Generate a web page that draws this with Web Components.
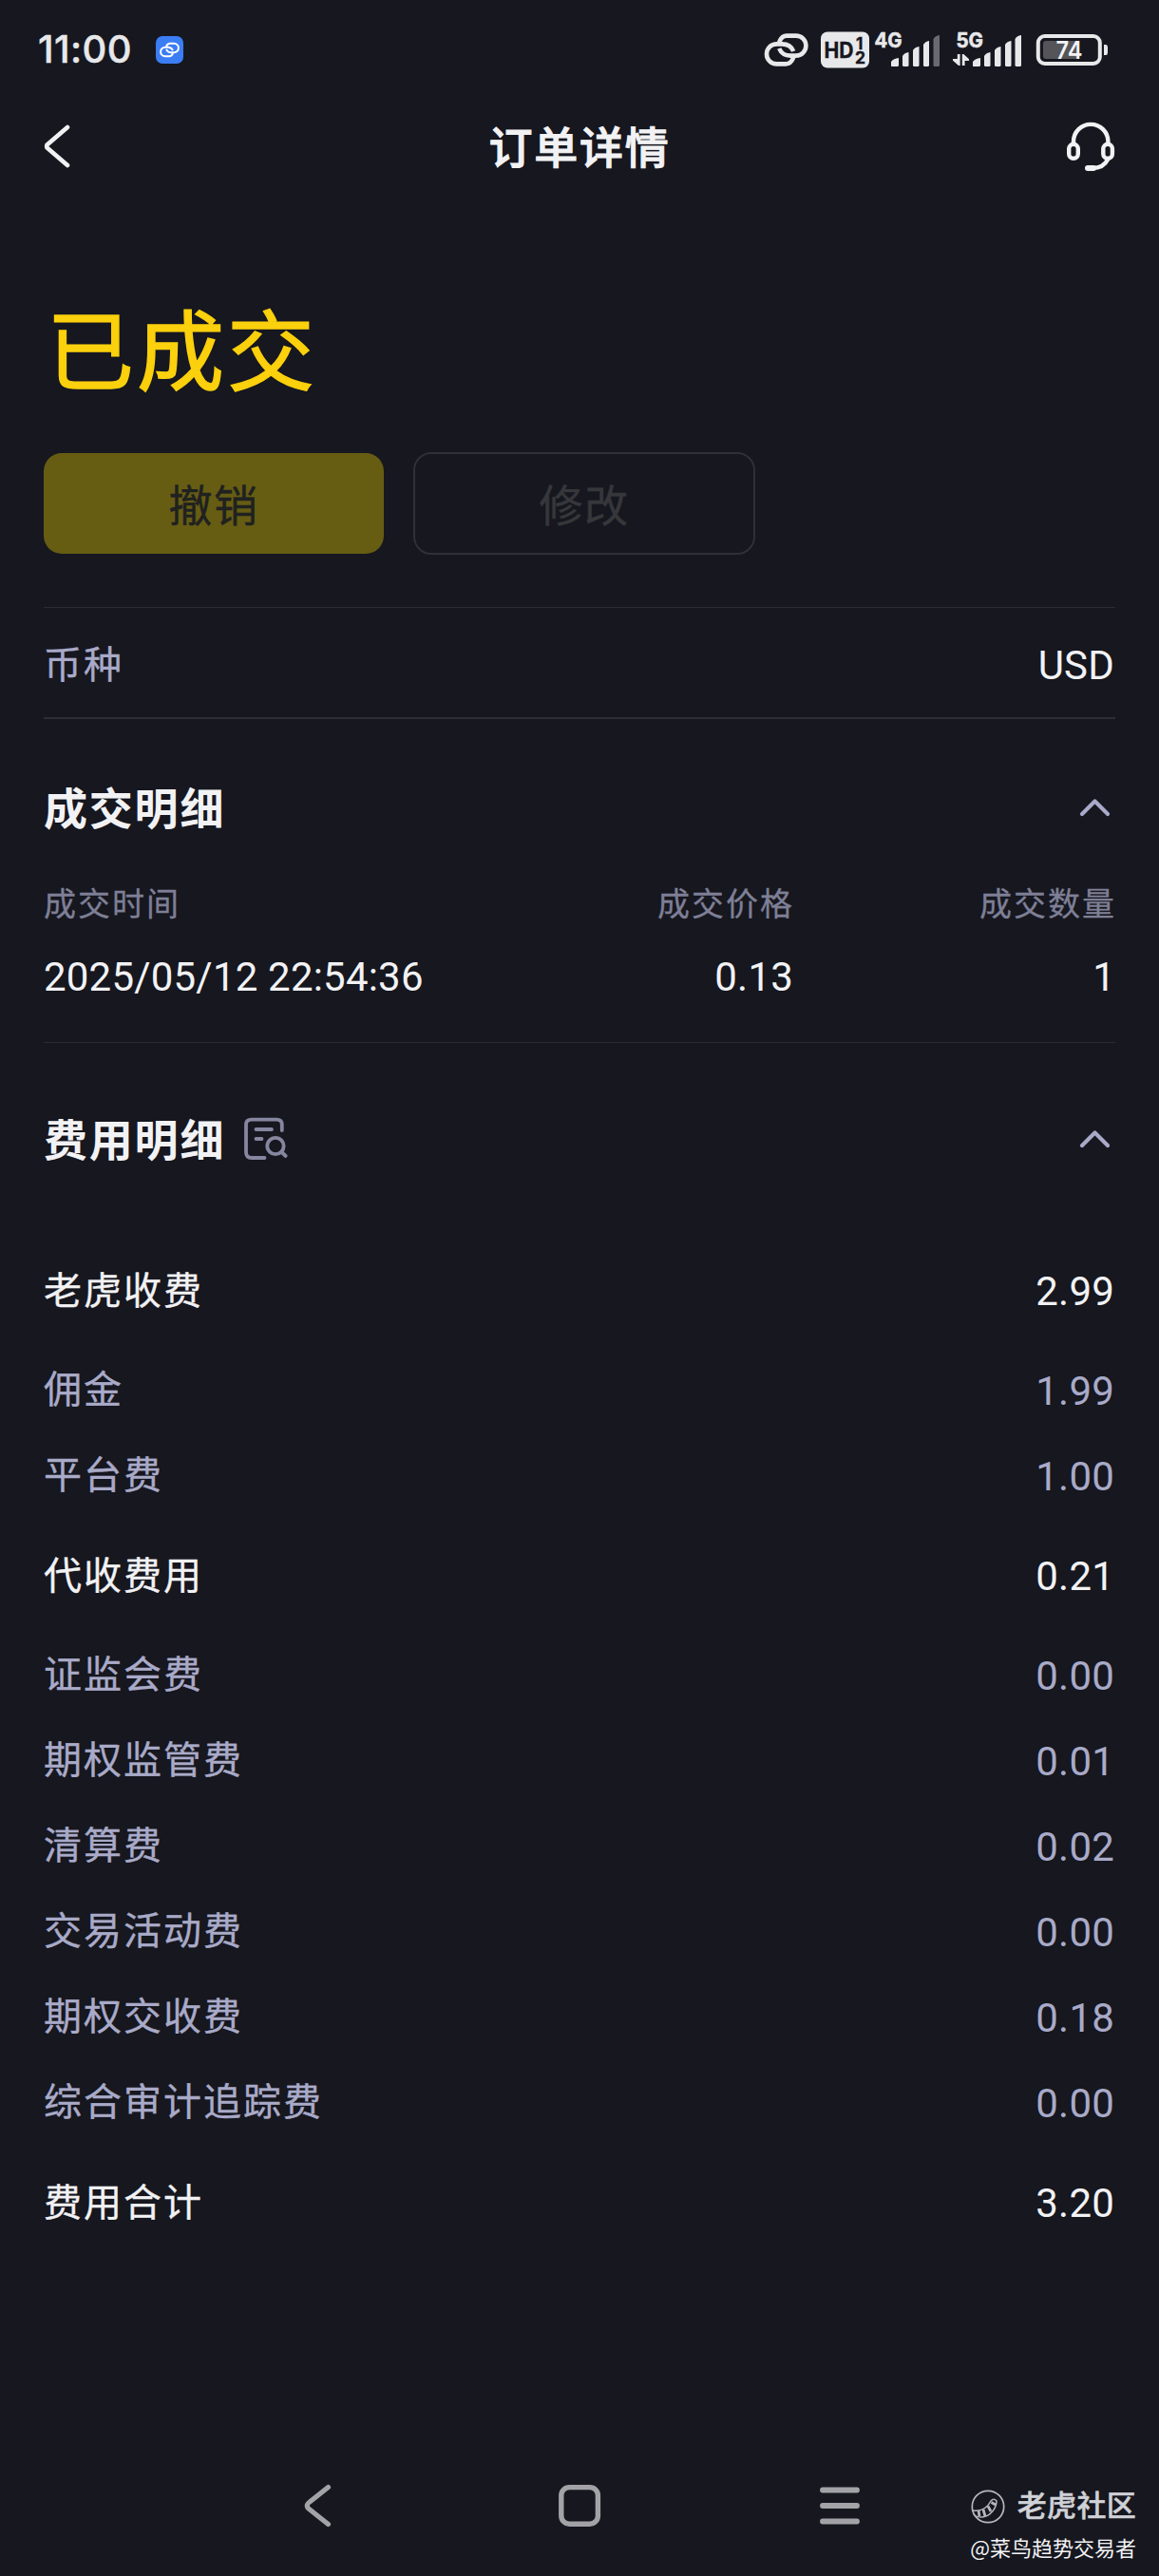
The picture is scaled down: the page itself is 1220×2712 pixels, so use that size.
<!DOCTYPE html>
<html lang="zh-CN">
<head>
<meta charset="utf-8">
<title>订单详情</title>
<style>
html,body{margin:0;background:#16171f}
body{width:1220px;height:2712px;overflow:hidden;font-family:Roboto,"Noto Sans CJK SC",sans-serif;color:#f2f2f4}
</style>
</head>
<body>
<order-page></order-page>
<script>
const define = (name, html) => customElements.define(name, class extends HTMLElement {
  constructor() {
    super();
    this.attachShadow({mode: 'open'}).innerHTML = typeof html === 'function' ? html(this) : html;
  }
});

const chain = '<path d="M-7.600-8C-5.800-12.500-2.900-14.900.5-14.900H10.200A10.500 10.500 0 0 1 10.200 6.100H4.500C-1 6.100-5.500 3.400-7.500-1.500"/><path d="M7.600 8C5.800 12.500 2.900 14.900-.5 14.900H-10.200A10.500 10.500 0 0 1-10.200-6.100H-4.500C1-6.100 5.500-3.400 7.500 1.500"/>';
const icons = {
  app: [164, 37, 29, 29, `<rect x="164" y="37" width="29" height="29" rx="7" fill="#3b7df3"/><g transform="translate(178.500 51.500) scale(.455)" fill="none" stroke="#fff" stroke-width="4.400">${chain}</g>`],
  link: [805, 33, 48, 37, `<g transform="translate(828.700 51.500)" fill="none" stroke="#e8e8ea" stroke-width="4.600">${chain}</g>`],
  hd: [865, 32, 51, 39, '<rect x="865" y="32.500" width="51" height="38" rx="7" fill="#e8e8ea"/><g fill="#16171f" stroke="#16171f" stroke-width=".4" font-family="Inter,sans-serif" font-weight="700"><text x="868.500" y="59.500" font-size="22.500" textLength="31" lengthAdjust="spacingAndGlyphs">HD</text><text x="902" y="50.500" font-size="17">1</text><text x="901" y="65.500" font-size="17" textLength="11" lengthAdjust="spacingAndGlyphs">2</text></g>'],
  four: [921, 22, 70, 58, '<text x="921.500" y="49.300" font-size="21.500" font-weight="700" stroke="#e8e8ea" stroke-width=".6" font-family="Inter,sans-serif" fill="#e8e8ea" textLength="29" lengthAdjust="spacingAndGlyphs">4G</text><g fill="#e8e8ea"><path d="M939 68.500V64Q941.500 60.500 947 60V67.500Q947 69 945.500 69H939.500Z"/><path d="M951 58Q953 54.500 957.500 54V67.500Q957.500 69 956 69H952.500Q951 69 951 67.500Z"/><path d="M962 52Q964 48.500 968.500 48V67.500Q968.500 69 967 69H963.500Q962 69 962 67.500Z"/><path d="M973 46Q975 42.500 979 42V67.500Q979 69 977.500 69H974.500Q973 69 973 67.500Z"/><path opacity=".4" d="M983.500 40Q985.500 36.500 990 36V67.500Q990 69 988.500 69H985Q983.500 69 983.500 67.500Z"/></g>'],
  five: [1003, 22, 74, 58, '<text x="1007.500" y="49.300" font-size="21.500" font-weight="700" stroke="#e8e8ea" stroke-width=".6" font-family="Inter,sans-serif" fill="#e8e8ea" textLength="28.500" lengthAdjust="spacingAndGlyphs">5G</text><g fill="#e8e8ea"><path d="M1008.800 56H1011.600V68H1010L1004 62.700V61H1008.800ZM1013.800 68V56H1015.400L1021 61.300V63H1016.600V68Z"/><path d="M1025 68.500V64Q1027.500 60.500 1033 60V67.500Q1033 69 1031.500 69H1025.500Z"/><path d="M1037 58Q1039 54.500 1043.500 54V67.500Q1043.500 69 1042 69H1038.500Q1037 69 1037 67.500Z"/><path d="M1048 52Q1050 48.500 1054.500 48V67.500Q1054.500 69 1053 69H1049.500Q1048 69 1048 67.500Z"/><path d="M1059 46Q1061 42.500 1065.500 42V67.500Q1065.500 69 1064 69H1060.500Q1059 69 1059 67.500Z"/><path d="M1069.500 40Q1071.500 36.500 1076 36V67.500Q1076 69 1074.500 69H1071Q1069.500 69 1069.500 67.500Z"/></g>'],
  battery: [1091, 34, 77, 35, '<rect x="1093.800" y="37" width="65" height="29" rx="7" fill="none" stroke="#e8e8ea" stroke-width="4"/><path d="M1102 42H1134V61H1102Q1099 61 1099 58V45Q1099 42 1102 42Z" fill="#545459"/><path d="M1163 46H1165Q1167 46 1167 48.500V54.500Q1167 57 1165 57H1163Z" fill="#e8e8ea"/><text x="1112.500" y="61" font-size="25.500" font-weight="600" font-family="Inter,sans-serif" fill="#f2f2f4" textLength="28" lengthAdjust="spacingAndGlyphs">74</text>'],
  back: [46, 130, 28, 48, '<path d="M71 134 49.500 152.500Q48.800 154 49.500 155.500L71 174" fill="none" stroke="#f2f2f4" stroke-width="4.600" stroke-linecap="round" stroke-linejoin="round"/>'],
  headset: [1122, 127, 52, 54, '<g fill="none" stroke="#f2f2f4" stroke-width="4.400" stroke-linecap="round"><path d="M1130 150V149A18.200 18.200 0 0 1 1166.400 149V150"/><rect x="1125.200" y="151.800" width="9.600" height="15" rx="4.800"/><rect x="1161.300" y="151.800" width="9.600" height="15" rx="4.800"/><path d="M1166 168C1163 174 1157 177 1150 177"/><path d="M1145 177H1151" stroke-width="6"/></g>'],
  up: [1137, 839, 33, 20, '<path d="M1140 856 1153.500 842.500 1167 856" fill="none" stroke="#a9aac8" stroke-width="4.200" stroke-linecap="round" stroke-linejoin="round"/>'],
  bill: [256, 1175, 48, 48, '<g fill="none" stroke="#85869f" stroke-width="3.800" stroke-linecap="round"><path d="M296.800 1190V1184Q296.800 1178.700 291 1178.700H265Q259 1178.700 259 1184V1213Q259 1219 265 1219H278.500"/><path d="M269.500 1189H286M269.500 1199H275.500M297 1213.500 300.700 1217"/><circle cx="290" cy="1206.500" r="8.700"/></g>'],
  navback: [319, 2614, 31, 48, '<path d="M345.500 2618.500 326 2634Q320.500 2638 326 2642L345.500 2657.500" fill="none" stroke="#a3a3a7" stroke-width="5.200" stroke-linecap="round" stroke-linejoin="round"/>'],
  home: [586, 2614, 48, 48, '<rect x="590.800" y="2618.600" width="38.600" height="38.600" rx="8.500" fill="none" stroke="#a3a3a7" stroke-width="5.400"/>'],
  menu: [861, 2614, 46, 48, '<path d="M866 2621.500H902M866 2638H902M866 2654.500H902" stroke="#a3a3a7" stroke-width="5.800" stroke-linecap="round"/>'],
  tiger: [1022, 2620, 38, 38, '<g fill="none" stroke="#b5b6be"><circle cx="1041" cy="2639" r="16.700" stroke-width="1.700"/><path d="M1025 2643C1033 2644 1040 2641 1044 2633Q1047 2629.500 1050 2633C1050 2640 1044 2649 1035 2650C1031 2650 1027 2649 1026 2647" stroke-width="1.500"/><path d="M1031 2643 1032 2649M1036 2642 1038 2649M1041 2638.500 1044 2644M1044.500 2634.500 1049 2637" stroke-width="2.800"/></g>']
};
define('ui-icon', el => {
  const [x, y, w, h, art] = icons[el.getAttribute('name')];
  return `<style>:host{display:block;flex:none}svg{display:block}</style><svg width="${w}" height="${h}" viewBox="${x} ${y} ${w} ${h}">${art}</svg>`;
});

define('status-bar', `<style>
:host{display:flex;height:104px;padding:0 53px 0 40px;align-items:center;box-sizing:border-box}
.time{font:500 40px/50px Inter,sans-serif;color:#e8e8ea;width:124px;letter-spacing:.4px;-webkit-text-stroke:.4px}
.right{margin-left:auto;display:flex;align-items:center}
.hd{margin-left:12px}.four{margin-left:5px}.five{margin-left:12px}.bat{margin-left:14px}
</style><span class="time">11:00</span><ui-icon name="app"></ui-icon>
<div class="right"><ui-icon name="link"></ui-icon><ui-icon class="hd" name="hd"></ui-icon><ui-icon class="four" name="four"></ui-icon><ui-icon class="five" name="five"></ui-icon><ui-icon class="bat" name="battery"></ui-icon></div>`);

define('title-bar', `<style>
:host{display:flex;height:100px;padding:0 46px;align-items:center;justify-content:space-between}
h1{margin:0 0 0 24px;padding-top:3px;font-size:46px;line-height:60px;font-weight:500;letter-spacing:1.800px;-webkit-text-stroke:1px}
</style><ui-icon name="back"></ui-icon><h1><slot></slot></h1><ui-icon name="headset"></ui-icon>`);

define('action-button', `<style>
:host{display:flex;width:358px;height:106px;border-radius:19px;align-items:center;justify-content:center;font-size:46px;letter-spacing:1.500px;background:#665d13;color:#202120;-webkit-text-stroke:.4px}
:host([ghost]){width:356px;height:104px;background:none;border:2px solid #303137;color:#36373b}
span{padding-bottom:3px}
</style><span><slot></slot></span>`);

define('section-head', `<style>
:host{display:flex;height:60px;align-items:center}
h2{margin:0;padding-top:3px;font-size:46px;line-height:60px;font-weight:700;letter-spacing:1.800px}
.extra{margin-left:19px}.up{margin:0 5px 0 auto}
</style><h2><slot></slot></h2><span class="extra"><slot name="icon"></slot></span><ui-icon class="up" name="up"></ui-icon>`);

define('data-row', el => `<style>
:host{display:flex;height:90px;align-items:center;justify-content:space-between;font-size:40px;line-height:60px;color:#a9aac8}
:host([strong]){height:120px;color:#f2f2f4}
:host([rule]){height:108px;padding-top:7px;color:#a9aac8;border-top:1px solid #2b2c33;border-bottom:2px solid #2d2e35}
:host([rule]) b{color:#f2f2f4}
span{letter-spacing:2px;padding-bottom:2px;-webkit-text-stroke:.35px}
:host([strong]) span,:host([rule]) span{padding-bottom:0}
b{font:400 42px/60px Roboto,sans-serif;letter-spacing:.2px;margin-right:1px}
</style><span>${el.getAttribute('label')}</span><b>${el.getAttribute('value')}</b>`);

define('fill-table', `<style>
:host{display:grid;grid-template-columns:1fr 260px 339px;row-gap:18px;font:400 42px/60px Roboto,sans-serif;letter-spacing:.2px}
.h{font:400 34px/62px "Noto Sans CJK SC",sans-serif;letter-spacing:2px;color:#7e7f96;-webkit-text-stroke:.3px}
.r{text-align:right}
.h.r{margin-right:-1px}
</style><span class="h">成交时间</span><span class="h r">成交价格</span><span class="h r">成交数量</span>
<span>2025/05/12 22:54:36</span><span class="r">0.13</span><span class="r">1</span>`);

define('nav-bar', `<style>
:host{display:flex;height:48px;padding-left:319px;align-items:center}
.home{margin-left:236px}.menu{margin-left:227px}
</style><ui-icon name="navback"></ui-icon><ui-icon class="home" name="home"></ui-icon><ui-icon class="menu" name="menu"></ui-icon>`);

define('community-mark', `<style>
:host{display:flex;flex-direction:column;align-items:flex-end;position:absolute;right:24px;bottom:17px}
.brand{display:flex;align-items:center;gap:12px;font-size:31px;line-height:40px;font-weight:500;color:#d0d1d6;letter-spacing:.300px;-webkit-text-stroke:.5px}
.name{font:400 22px/28px "Noto Sans CJK SC",sans-serif;margin-top:8px;white-space:nowrap}
</style><div class="brand"><ui-icon name="tiger"></ui-icon><span>老虎社区</span></div><div class="name">@菜鸟趋势交易者</div>`);

define('order-page', `<style>
:host{display:flex;flex-direction:column;position:relative;width:1220px;height:2712px;background:#16171f;overflow:hidden}
main{display:flex;flex-direction:column;padding:0 46px;flex:1}
.state{font-size:92px;line-height:120px;letter-spacing:3px;color:#fbd00c;margin-top:109px;padding-left:3px;-webkit-text-stroke:1.4px}
.actions{display:flex;align-items:center;gap:31px;height:108px;margin-top:43px;margin-bottom:55px}
.fills{margin-top:63px}
fill-table{margin-top:39px}
hr{border:0;height:1px;width:100%;background:#2b2c33;margin:38px 0 71px}
.fees{margin-top:71px}
nav-bar{margin-bottom:50px}
</style>
<status-bar></status-bar>
<title-bar>订单详情</title-bar>
<main>
<div class="state">已成交</div>
<div class="actions"><action-button>撤销</action-button><action-button ghost>修改</action-button></div>
<data-row rule label="币种" value="USD"></data-row>
<section-head class="fills">成交明细</section-head>
<fill-table></fill-table>
<hr>
<section-head>费用明细<ui-icon slot="icon" name="bill"></ui-icon></section-head>
<div class="fees">
<data-row strong label="老虎收费" value="2.99"></data-row>
<data-row label="佣金" value="1.99"></data-row>
<data-row label="平台费" value="1.00"></data-row>
<data-row strong label="代收费用" value="0.21"></data-row>
<data-row label="证监会费" value="0.00"></data-row>
<data-row label="期权监管费" value="0.01"></data-row>
<data-row label="清算费" value="0.02"></data-row>
<data-row label="交易活动费" value="0.00"></data-row>
<data-row label="期权交收费" value="0.18"></data-row>
<data-row label="综合审计追踪费" value="0.00"></data-row>
<data-row strong label="费用合计" value="3.20"></data-row>
</div>
</main>
<nav-bar></nav-bar>
<community-mark></community-mark>`);
</script>
</body>
</html>
